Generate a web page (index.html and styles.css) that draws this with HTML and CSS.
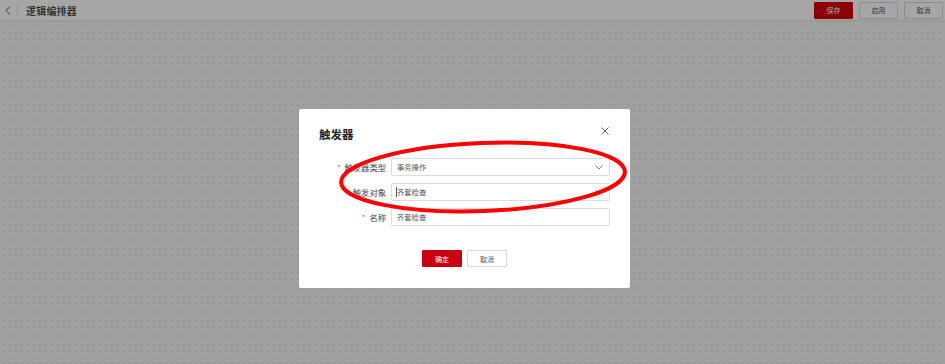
FILE: index.html
```html
<!DOCTYPE html>
<html lang="zh">
<head>
<meta charset="utf-8">
<link rel="stylesheet" href="styles.css">
</head>
<body>
<div class="app">
  <header class="topbar">
    <div class="left">
      <span class="back"><svg width="6" height="9" viewBox="0 0 6 9"><path d="M5 0.5 L1 4.5 L5 8.5" fill="none" stroke="#555" stroke-width="1"/></svg></span>
      <span class="sep"></span>
      <span class="title">逻辑编排器</span>
    </div>
    <div class="actions">
      <button class="btn primary">保存</button>
      <button class="btn">启用</button>
      <button class="btn">取消</button>
    </div>
  </header>
  <main class="canvas"></main>
</div>
<div class="mask">
  <div class="modal">
    <div class="modal-head">
      <span class="modal-title">触发器</span>
      <span class="close"><svg width="8" height="8" viewBox="0 0 8 8"><path d="M0.5 0.5 L7.5 7.5 M7.5 0.5 L0.5 7.5" stroke="#666" stroke-width="1"/></svg></span>
    </div>
    <div class="form">
      <div class="row">
        <label class="label"><i>*</i>触发器类型</label>
        <div class="input select"><span>事务操作</span><svg width="8" height="5" viewBox="0 0 8 5"><path d="M0.5 0.5 L4 4 L7.5 0.5" fill="none" stroke="#888" stroke-width="1"/></svg></div>
      </div>
      <div class="row">
        <label class="label"><i>*</i>触发对象</label>
        <div class="input select"><span class="caret">齐套检查</span><svg width="8" height="5" viewBox="0 0 8 5"><path d="M0.5 0.5 L4 4 L7.5 0.5" fill="none" stroke="#888" stroke-width="1"/></svg></div>
      </div>
      <div class="row">
        <label class="label"><i>*</i>名称</label>
        <div class="input"><span>齐套检查</span></div>
      </div>
    </div>
    <div class="footer">
      <button class="mbtn primary">确定</button>
      <button class="mbtn">取消</button>
    </div>
    <svg class="annot" width="300" height="90" viewBox="0 0 300 90"><ellipse cx="150" cy="45" rx="142" ry="34" transform="rotate(-2.2 150 45)" fill="none" stroke="#ff0000" stroke-width="4"/></svg>
  </div>
</div>
</body>
</html>
```
FILE: styles.css
```css
* { box-sizing: border-box; }
html, body { margin: 0; padding: 0; }
body {
  width: 945px;
  height: 364px;
  overflow: hidden;
  font-family: "Noto Sans CJK SC", "Noto Sans", sans-serif;
  color: #333;
}
.app {
  display: flex;
  flex-direction: column;
  height: 364px;
}
.topbar {
  height: 21px;
  background: #fff;
  border-bottom: 1px solid #e6e6e6;
  display: flex;
  align-items: center;
  justify-content: space-between;
  padding: 0 2px 0 4px;
}
.left { display: flex; align-items: center; }
.back { display: flex; width: 8px; justify-content: center; }
.sep { width: 1px; height: 12px; background: #e2e2e2; margin: 0 8px 0 5px; }
.title { font-size: 10px; font-weight: 500; color: #333; letter-spacing: 0.2px; }
.actions { display: flex; gap: 6px; align-items: center; }
.btn {
  font-family: inherit;
  width: 39px;
  height: 17px;
  font-size: 7px;
  border: 1px solid #d6d6d6;
  background: #fff;
  color: #555;
  padding: 0;
  border-radius: 1px;
}
.btn.primary { background: #d8000c; border-color: #d8000c; color: #fff; }
.canvas {
  flex: 1;
  background-color: #f6f6f6;
  background-image: radial-gradient(circle, #e4e4e4 0.7px, transparent 0.9px);
  background-size: 6px 6px;
  background-position: 1px 2px;
  border-top: 1px solid #efefef;
}
.mask {
  position: fixed;
  inset: 0;
  background: rgba(0, 0, 0, 0.35);
  display: flex;
  align-items: flex-start;
  padding: 109px 0 0 299px;
}
.modal {
  position: relative;
  width: 331px;
  height: 179px;
  background: #fff;
  border-radius: 2px;
  padding: 17px 20px 0 20px;
}
.modal-head {
  display: flex;
  justify-content: space-between;
  align-items: flex-start;
}
.modal-title { font-size: 11.5px; font-weight: 700; color: #222; }
.close { display: flex; margin-top: 1px; margin-right: 1px; }
.form {
  margin-top: 16px;
  display: flex;
  flex-direction: column;
  gap: 7px;
}
.row { display: flex; align-items: center; gap: 5px; }
.label {
  width: 67px;
  text-align: right;
  font-size: 8.3px;
  color: #444;
}
.label i { font-style: normal; color: #e5323e; font-size: 7px; margin-right: 4px; vertical-align: 1px; }
.input {
  width: 219px;
  height: 18px;
  border: 1px solid #dcdcdc;
  border-radius: 1px;
  display: flex;
  align-items: center;
  justify-content: space-between;
  padding: 0 6px 0 5px;
  font-size: 7.3px;
  color: #555;
}
.caret { border-left: 1px solid #555; margin-left: -1px; }
.footer {
  display: flex;
  justify-content: center;
  gap: 5px;
  margin-top: 24px;
}
.mbtn {
  font-family: inherit;
  width: 40px;
  height: 17px;
  padding: 0;
  font-size: 7px;
  border: 1px solid #d9d9d9;
  background: #fff;
  color: #555;
  border-radius: 1px;
}
.mbtn.primary { background: #c8000f; border-color: #c8000f; color: #fff; }
.annot {
  position: absolute;
  left: 34px;
  top: 23px;
  pointer-events: none;
}
```
